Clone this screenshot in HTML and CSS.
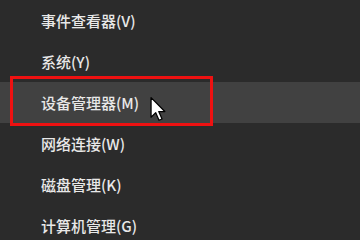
FILE: index.html
```html
<!DOCTYPE html>
<html lang="zh-CN">
<head>
    <meta charset="UTF-8">
    <title>菜单</title>
    <link rel="stylesheet" href="styles.css">
</head>
<body>
    <ul class="menu">
        <li class="menu-item">事件查看器(V)</li>
        <li class="menu-item">系统(Y)</li>
        <li class="menu-item active">
            设备管理器(M)
            <span class="mark"></span>
            <svg class="cursor" width="16" height="24" viewBox="0 0 12 19">
                <path d="M0.5 0.5 L0.5 16 L4.2 12.4 L6.8 18.4 L9.2 17.4 L6.6 11.5 L11.4 11.5 Z" fill="#fff" stroke="#000" stroke-width="1" stroke-linejoin="round"/>
            </svg>
        </li>
        <li class="menu-item">网络连接(W)</li>
        <li class="menu-item">磁盘管理(K)</li>
        <li class="menu-item">计算机管理(G)</li>
    </ul>
</body>
</html>
```

FILE: styles.css
```css
body {
    margin: 0;
    background-color: #2b2b2b;
    font-family: "Noto Sans CJK SC", "Noto Sans", sans-serif;
    overflow: hidden;
}

.menu {
    list-style: none;
    margin: 0;
    padding: 0;
}

.menu-item {
    position: relative;
    height: 41px;
    line-height: 41px;
    padding-left: 41px;
    font-size: 15px;
    font-weight: 500;
    color: #e8e8e8;
}

.menu-item.active {
    background-color: #414141;
}

/* red annotation box */
.mark {
    position: absolute;
    top: -6px;
    left: 10px;
    width: 197px;
    height: 44px;
    border: 3px solid #ee1111;
}

.cursor {
    position: absolute;
    left: 150px;
    top: 15px;
}
```
